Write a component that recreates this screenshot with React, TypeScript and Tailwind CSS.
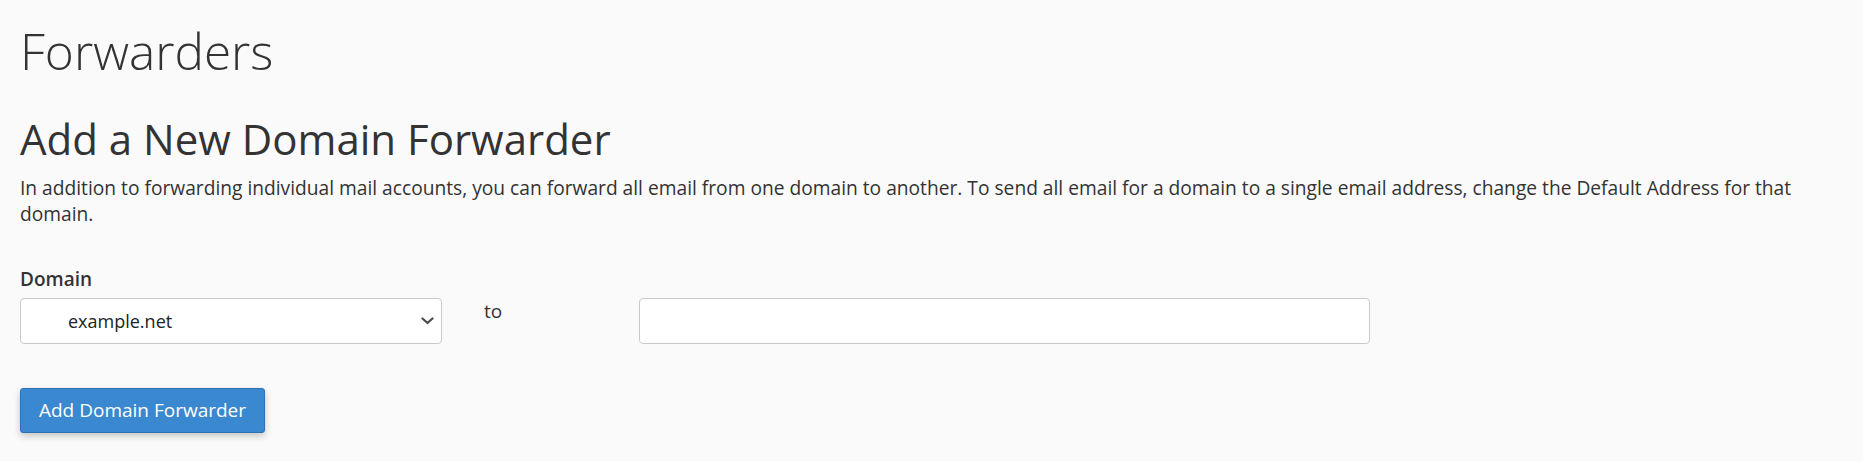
import { useState } from 'react'

const ChevronDown = () => (
  <svg width="13" height="8" viewBox="0 0 13 8" fill="none" className="shrink-0">
    <path d="M1.5 1.5 L6.5 6 L11.5 1.5" stroke="#4a4a4a" strokeWidth="2.2" strokeLinecap="round" strokeLinejoin="round" />
  </svg>
)

const App = () => {
  const [target, setTarget] = useState('')

  return (
    <div className="min-h-[461px] w-full bg-[#fafafa] px-5 text-[#333] font-['Open_Sans',_'Noto_Sans',_sans-serif]">
      <h1 className="pt-[24px] text-[49.5px] leading-[54px] font-light text-[#333]">Forwarders</h1>

      <h2 className="mt-[40px] text-[42px] leading-[42px] font-normal text-[#333]">
        Add a New Domain Forwarder
      </h2>

      <p className="mt-[15px] text-[19.2px] leading-[26px] text-[#333]">
        In addition to forwarding individual mail accounts, you can forward all email from one domain to
        another. To send all email for a domain to a single email address, change the Default Address for
        that domain.
      </p>

      <label className="mt-[39px] block text-[19px] leading-[26px] font-semibold text-[#333]">Domain</label>

      <div className="mt-[6px] flex items-start">
        <div className="flex h-[46px] w-[422px] items-center justify-between rounded-[4px] border border-[#c9c9c9] bg-white pl-[47px] pr-[7px]">
          <span className="text-[18px] leading-[25px] text-[#222]">example.net</span>
          <ChevronDown />
        </div>
        <div className="ml-[42px] w-[155px] text-[19px] leading-[26px] text-[#333]">to</div>
        <input
          value={target}
          onChange={(e) => setTarget(e.target.value)}
          className="h-[46px] w-[731px] rounded-[4px] border border-[#c9c9c9] bg-white px-3 text-[18px] outline-none"
        />
      </div>

      <button className="mt-[44px] h-[45px] w-[245px] rounded-[3px] border border-[#2f72b3] bg-[#3a88cf] text-[19px] text-white shadow-[0_3px_7px_rgba(0,0,0,0.22)]">
        Add Domain Forwarder
      </button>
    </div>
  )
}

export default App
